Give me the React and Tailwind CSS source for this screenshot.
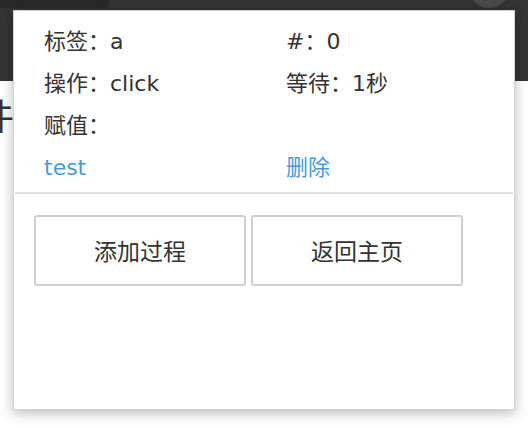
import React from 'react'

const FONT = { fontFamily: '"DejaVu Sans", "Noto Sans CJK SC", sans-serif' }
const CJK = { fontFamily: '"Noto Sans CJK SC", sans-serif' }

// 一行：左右两列
function Row({ left, right }) {
  return (
    <div className="grid h-[42px] grid-cols-[242px_1fr] items-center">
      <div>{left}</div>
      <div>{right}</div>
    </div>
  )
}

export default function App() {
  return (
    <div className="relative h-[428px] w-[528px] overflow-hidden bg-white text-[#333]" style={FONT}>
      {/* 背景页面 */}
      <div className="relative h-[81px] bg-[#333]">
        <div className="absolute left-0 top-0 h-[8px] w-[110px] rounded-br-[12px] bg-[#282828]" />
        <div className="absolute right-[18px] top-[-34px] h-[42px] w-[42px] rounded-full bg-[#4a4a4a]" />
      </div>
      <div className="ml-[-22px] mt-[15px] text-[36px] leading-none text-[#333]" style={CJK}>件</div>

      {/* 弹出层 */}
      <div className="absolute left-[13px] top-[10px] flex h-[400px] w-[502px] flex-col border border-[#d4d4d4] bg-white shadow-[0_3px_12px_rgba(0,0,0,0.28)]">
        <div className="mx-[1px] border-b-2 border-[#e0e0e0] pb-[4px] pl-[29px] pt-[9px] text-[22px]">
          <Row left="标签：a" right="#：0" />
          <Row left="操作：click" right="等待：1秒" />
          <Row left="赋值：" right="" />
          <Row
            left={<span className="text-[#4a9ad6]">test</span>}
            right={<span className="text-[#4a9ad6]">删除</span>}
          />
        </div>
        <div className="flex gap-[5px] pl-[20px] pt-[21px]">
          <button className="h-[71px] w-[212px] rounded-[3px] border-2 border-[#cfcfcf] text-[23px] text-[#333]" style={CJK}>
            添加过程
          </button>
          <button className="h-[71px] w-[212px] rounded-[3px] border-2 border-[#cfcfcf] text-[23px] text-[#333]" style={CJK}>
            返回主页
          </button>
        </div>
      </div>
    </div>
  )
}
